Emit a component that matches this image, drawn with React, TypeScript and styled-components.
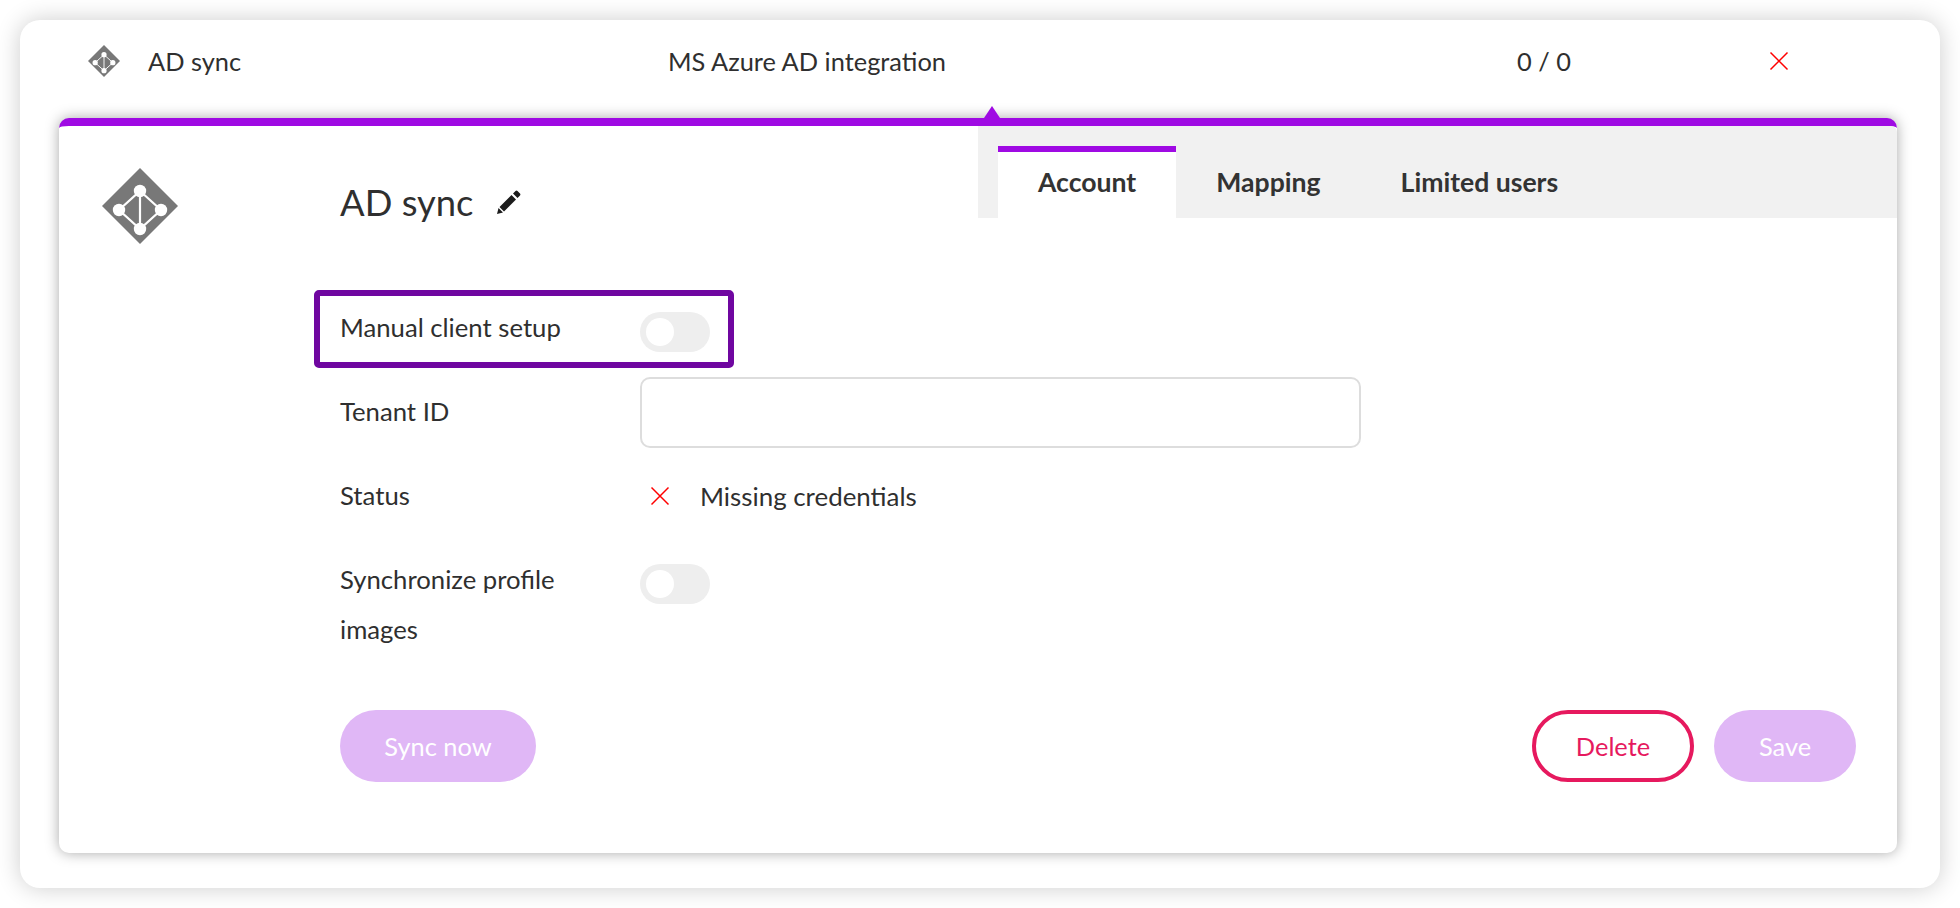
import React from 'react';
import styled, { createGlobalStyle } from 'styled-components';

const PURPLE = '#9f0ae3';
const TEXT = '#2f2f2f';

const GlobalStyle = createGlobalStyle`
  html, body {
    margin: 0;
    padding: 0;
    background: #fff;
    font-family: 'Lato', 'Liberation Sans', sans-serif;
    color: ${TEXT};
  }
  * { box-sizing: border-box; }
`;

const Page = styled.div`
  width: 1960px;
  height: 908px;
  padding: 20px;
  overflow: hidden;
`;

const Card = styled.div`
  height: 868px;
  padding: 0 43px 0 39px;
  border-radius: 20px;
  background: #fff;
  box-shadow: 0 0 25px rgba(0, 0, 0, 0.2);
`;

const Summary = styled.div`
  display: grid;
  grid-template-columns: 609px 849px 252px 1fr;
  align-items: center;
  height: 82px;
  margin-bottom: 16px;
  font-size: 25.4px;
`;

const SummaryName = styled.div`
  display: flex;
  align-items: center;
  gap: 28px;
  padding-left: 29px;
`;

const Detail = styled.section`
  position: relative;
  display: flex;
  height: 735px;
  border-top: 8px solid ${PURPLE};
  border-radius: 10px;
  background: #fff;
  box-shadow: 0 0 14px rgba(0, 0, 0, 0.34);

  &::before {
    content: '';
    position: absolute;
    top: -20px;
    left: 925px;
    border-left: 8px solid transparent;
    border-right: 8px solid transparent;
    border-bottom: 12px solid ${PURPLE};
  }
`;

const LogoColumn = styled.div`
  flex: 0 0 281px;
  padding: 42px 0 0 43px;
`;

const Main = styled.div`
  flex: 1;
  min-width: 0;
`;

const Head = styled.div`
  display: flex;
  justify-content: space-between;
  align-items: flex-start;
  height: 92px;
  margin-bottom: 68px;
`;

const Title = styled.h1`
  display: flex;
  align-items: center;
  gap: 22px;
  height: 40px;
  margin: 56px 0 0;
  font-size: 36.4px;
  font-weight: 400;
`;

const TabBar = styled.div`
  display: flex;
  align-items: flex-end;
  width: 919px;
  height: 92px;
  padding-left: 20px;
  background: #f1f1f1;
  border-top-right-radius: 6px;
`;

const Tab = styled.div<{ $active?: boolean }>`
  height: 72px;
  padding: 12px 40px 0;
  border-top: 6px solid ${(p) => (p.$active ? PURPLE : 'transparent')};
  background: ${(p) => (p.$active ? '#fff' : 'transparent')};
  font-size: 26.6px;
  line-height: 36px;
  font-weight: 700;
  color: #333;
`;

const Row = styled.div`
  position: relative;
  display: grid;
  grid-template-columns: 300px 721px;
  padding: 17px 0;
`;

const Highlight = styled.div`
  position: absolute;
  top: 4px;
  left: -26px;
  width: 420px;
  height: 78px;
  border: 6px solid #6f06a0;
  border-radius: 5px;
`;

const Label = styled.div`
  width: 250px;
  margin: -1px 0 1px;
  font-size: 25.7px;
  line-height: 50px;
`;

const Control = styled.div`
  display: flex;
  align-items: center;
  height: 50px;
  font-size: 25.9px;
`;

const Toggle = styled.div`
  display: flex;
  align-items: center;
  width: 70px;
  height: 40px;
  margin-top: 8px;
  padding-left: 6px;
  border-radius: 20px;
  background: #eee;

  &::after {
    content: '';
    width: 28px;
    height: 28px;
    border-radius: 50%;
    background: #fff;
  }
`;

const TextInput = styled.input`
  flex: none;
  width: 721px;
  height: 71px;
  border: 2px solid #ddd;
  border-radius: 10px;
  background: #fff;
  outline: none;
`;

const StatusMark = styled.span`
  display: flex;
  margin: 0 30px 0 10px;
`;

const Actions = styled.div`
  display: flex;
  justify-content: space-between;
  margin-top: 38px;
  padding-right: 41px;
`;

const ActionGroup = styled.div`
  display: flex;
  gap: 20px;
`;

const Button = styled.button<{ $danger?: boolean; $width: number }>`
  width: ${(p) => p.$width}px;
  height: 72px;
  border: ${(p) => (p.$danger ? '4px solid #e6195e' : 'none')};
  border-radius: 36px;
  background: ${(p) => (p.$danger ? '#fff' : '#e0b7f6')};
  color: ${(p) => (p.$danger ? '#e6195e' : '#fff')};
  font-family: inherit;
  font-size: 25.4px;
`;

const AdLogo = ({ size }: { size: number }) => (
  <svg width={size} height={size} viewBox="0 0 76 76" style={{ display: 'block' }}>
    <polygon points="38,0 76,38 38,76 0,38" fill="#787878" />
    <g stroke="#fff" strokeWidth="2.2" fill="none">
      <polygon points="38,23 59,42 38,61 17,42" />
      <line x1="38" y1="23" x2="38" y2="61" />
    </g>
    <g fill="#fff">
      <circle cx="38" cy="23" r="6.2" />
      <circle cx="17" cy="42" r="6.2" />
      <circle cx="59" cy="42" r="6.2" />
      <circle cx="38" cy="61" r="6.2" />
    </g>
  </svg>
);

const CrossIcon = () => (
  <svg width="20" height="20" viewBox="0 0 20 20" style={{ display: 'block' }}>
    <path d="M1.5 1.5 L18.5 18.5 M18.5 1.5 L1.5 18.5" stroke="#f00" strokeWidth="1.5" fill="none" />
  </svg>
);

const PencilIcon = () => (
  <svg width="26" height="26" viewBox="0 0 26 26" style={{ display: 'block' }}>
    <path d="M1 25 L2.5 19 L7 23.5 Z M3.5 18 L15.5 6 L20 10.5 L8 22.5 Z M17 4.5 L19.5 2 Q20.5 1.2 21.5 2 L24 4.5 Q24.8 5.5 24 6.5 L21.5 9 Z" fill="#1c1c1c" />
  </svg>
);

export default function App() {
  return (
    <Page>
      <GlobalStyle />
      <Card>
        <Summary>
          <SummaryName>
            <AdLogo size={32} />
            AD sync
          </SummaryName>
          <div>MS Azure AD integration</div>
          <div>0 / 0</div>
          <CrossIcon />
        </Summary>
        <Detail>
          <LogoColumn>
            <AdLogo size={76} />
          </LogoColumn>
          <Main>
            <Head>
              <Title>
                AD sync
                <PencilIcon />
              </Title>
              <TabBar>
                <Tab $active>Account</Tab>
                <Tab>Mapping</Tab>
                <Tab>Limited users</Tab>
              </TabBar>
            </Head>
            <Row>
              <Highlight />
              <Label>Manual client setup</Label>
              <Control>
                <Toggle />
              </Control>
            </Row>
            <Row>
              <Label>Tenant ID</Label>
              <Control>
                <TextInput />
              </Control>
            </Row>
            <Row>
              <Label>Status</Label>
              <Control>
                <StatusMark>
                  <CrossIcon />
                </StatusMark>
                Missing credentials
              </Control>
            </Row>
            <Row>
              <Label>Synchronize profile images</Label>
              <Control>
                <Toggle />
              </Control>
            </Row>
            <Actions>
              <Button $width={196}>Sync now</Button>
              <ActionGroup>
                <Button $danger $width={162}>Delete</Button>
                <Button $width={142}>Save</Button>
              </ActionGroup>
            </Actions>
          </Main>
        </Detail>
      </Card>
    </Page>
  );
}
